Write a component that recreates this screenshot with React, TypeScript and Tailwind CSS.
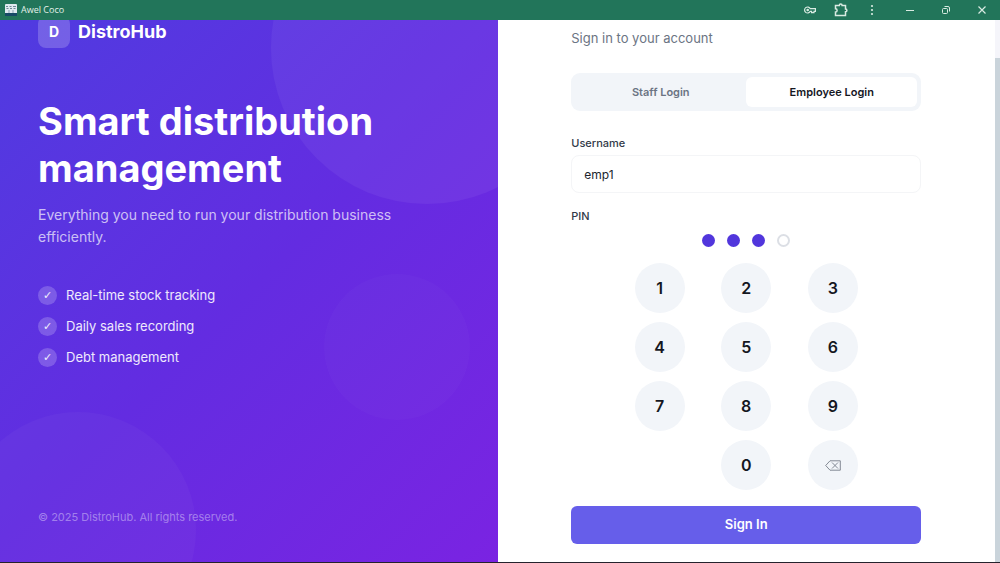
import { useState } from "react";
import type { ReactNode } from "react";

const features = ["Real-time stock tracking", "Daily sales recording", "Debt management"];
const digits = ["1", "2", "3", "4", "5", "6", "7", "8", "9"];

function BarButton({ label, children }: { label: string; children: ReactNode }) {
  return (
    <button type="button" aria-label={label} className="flex h-5 items-center justify-center text-[#d9ebe2]">
      {children}
    </button>
  );
}

function TitleBar() {
  return (
    <header className="relative z-10 flex h-5 shrink-0 items-center justify-between bg-[#22755a] pl-[5px]">
      <div className="flex items-center gap-1">
        <svg viewBox="0 0 12 12" className="size-3" aria-hidden="true">
          <rect width="12" height="12" rx="1" fill="#dfeaf0" />
          <rect y="9" width="12" height="3" fill="#174a66" />
          <path d="M1 2.500h2M4.500 2.500h2M8 2.500h3M1.500 4.500h2M5 4.500h2M8.500 4.500h2" stroke="#6d8795" strokeWidth="1" />
          <path d="M4 6v3M8 6v3" stroke="#8ba5b3" strokeWidth="1" />
        </svg>
        <span className="font-['Open_Sans',sans-serif] text-[9px] leading-5 text-[#e4f1ea]">Awel Coco</span>
      </div>
      <div className="flex items-center">
        <div className="grid grid-cols-[31px_31px_31px] pr-[5px]">
          <BarButton label="Passwords">
            <svg viewBox="0 0 12 8" className="h-2 w-3" fill="none" stroke="currentColor" strokeWidth="1.200">
              <path d="M6.300 2.700A3 3 0 1 0 6.300 5.300H7.600V6.600H10V5.300H11.400V2.700Z" />
              <circle cx="3.700" cy="4" r="0.700" fill="currentColor" />
            </svg>
          </BarButton>
          <BarButton label="Extensions">
            <svg viewBox="0 0 14 14" className="size-[14px]" fill="none" stroke="currentColor" strokeWidth="1.500">
              <path d="M1.500 2.500H5.300A1.400 1.400 0 0 1 8.100 2.500H11.500V6A1.400 1.400 0 0 1 11.500 8.800V12.500H1.500V9A1.600 1.600 0 0 0 1.500 5.800Z" />
            </svg>
          </BarButton>
          <BarButton label="Menu">
            <svg viewBox="0 0 4 12" className="h-3 w-1" fill="currentColor">
              <circle cx="2" cy="2" r="1.100" />
              <circle cx="2" cy="6" r="1.100" />
              <circle cx="2" cy="10" r="1.100" />
            </svg>
          </BarButton>
        </div>
        <div className="grid grid-cols-3">
          <BarButton label="Minimize">
            <svg viewBox="0 0 36 20" className="h-5 w-9" stroke="currentColor">
              <path d="M14 10.500h8" />
            </svg>
          </BarButton>
          <BarButton label="Restore">
            <svg viewBox="0 0 36 20" className="h-5 w-9" fill="none" stroke="currentColor">
              <rect x="14.500" y="8.500" width="5" height="5" rx="1" />
              <path d="M16.500 6.500h3.500a1.500 1.500 0 0 1 1.500 1.500v3.500" />
            </svg>
          </BarButton>
          <BarButton label="Close">
            <svg viewBox="0 0 36 20" className="h-5 w-9" stroke="currentColor" strokeWidth="1.200">
              <path d="M14.500 6.500l7 7M21.500 6.500l-7 7" />
            </svg>
          </BarButton>
        </div>
      </div>
    </header>
  );
}

function BrandPanel() {
  return (
    <section className="relative flex flex-col bg-linear-135 from-[#4f3be0] via-[#632ce1] to-[#7a23e2] px-[38px] pb-[37px] text-white">
      <div className="pointer-events-none absolute inset-0 overflow-hidden" aria-hidden="true">
        <div className="absolute -top-32 -right-[85px] size-[312px] rounded-full bg-white/5" />
        <div className="absolute -bottom-[86px] -left-10 size-[236px] rounded-full bg-white/3" />
        <div className="absolute right-7 bottom-[142px] size-[146px] rounded-full bg-white/2" />
      </div>
      <div className="relative -mt-1 flex items-center gap-2">
        <div className="flex size-8 items-center justify-center rounded-lg bg-white/20 text-sm font-bold">D</div>
        <span className="text-lg font-bold">DistroHub</span>
      </div>
      <h1 className="relative mt-[50px] text-[38px] leading-[47px] font-bold">
        Smart distribution
        <br />
        management
      </h1>
      <p className="relative mt-3 max-w-[375px] text-sm leading-[22px] text-white/70">
        Everything you need to run your distribution business efficiently.
      </p>
      <ul className="relative mt-[38px] flex flex-col gap-3">
        {features.map((feature) => (
          <li key={feature} className="flex items-center gap-[9px] text-[13px] leading-[19px] text-white/90">
            <span className="flex size-[19px] items-center justify-center rounded-full bg-white/20 font-['DejaVu_Sans',sans-serif] text-[11px]">
              ✓
            </span>
            {feature}
          </li>
        ))}
      </ul>
      <p className="relative mt-auto text-[11px] leading-4 text-white/40">© 2025 DistroHub. All rights reserved.</p>
    </section>
  );
}

function LoginPanel() {
  const [tab, setTab] = useState("Employee Login");
  const [pin, setPin] = useState("123");
  const press = (digit: string) => setPin((value) => (value + digit).slice(0, 4));
  const keyClass =
    "flex size-[50px] items-center justify-center rounded-full bg-[#f2f5f9] text-base font-semibold text-[#15171f]";

  return (
    <section className="flex flex-col items-center bg-white px-6 pt-2 pb-[18px]">
      <form className="flex w-full max-w-[350px] flex-col" onSubmit={(event) => event.preventDefault()}>
        <p className="text-[13px] leading-5 text-[#6b7483]">Sign in to your account</p>
        <div className="mt-[25px] flex rounded-[9px] bg-[#f2f5f9] p-1">
          {["Staff Login", "Employee Login"].map((name) => (
            <button
              key={name}
              type="button"
              aria-pressed={tab === name}
              onClick={() => setTab(name)}
              className={
                tab === name
                  ? "h-[30px] flex-1 rounded-md bg-white text-[11px] font-semibold text-[#15171f]"
                  : "h-[30px] flex-1 rounded-md text-[11px] font-semibold text-[#6b7483]"
              }
            >
              {name}
            </button>
          ))}
        </div>
        <label htmlFor="username" className="mt-6 text-[11px] leading-4 font-medium text-[#323a48]">
          Username
        </label>
        <input
          id="username"
          defaultValue="emp1"
          className="mt-1 h-[38px] rounded-lg border border-[#f4f5f7] bg-white px-3 text-xs text-[#20242d] outline-none"
        />
        <p className="mt-[15px] text-[11px] leading-4 font-medium text-[#323a48]">PIN</p>
        <div className="mt-[10px] flex justify-center gap-3" role="status" aria-label={pin.length + " of 4 digits entered"}>
          {[0, 1, 2, 3].map((slot) => (
            <span
              key={slot}
              className={
                slot < pin.length
                  ? "size-[13px] rounded-full bg-[#5136dc]"
                  : "size-[13px] rounded-full border-2 border-[#dcdfe5]"
              }
            />
          ))}
        </div>
        <div className="mx-auto mt-4 grid w-[250px] grid-cols-3 justify-items-center gap-x-[10px] gap-y-[9px]">
          {digits.map((digit) => (
            <button key={digit} type="button" className={keyClass} onClick={() => press(digit)}>
              {digit}
            </button>
          ))}
          <span />
          <button type="button" className={keyClass} onClick={() => press("0")}>
            0
          </button>
          <button type="button" aria-label="Delete digit" className={keyClass} onClick={() => setPin(pin.slice(0, -1))}>
            <svg viewBox="0 0 16 11" className="h-[11px] w-4" fill="none" stroke="#777e89" strokeWidth="0.900">
              <path d="M5 0.800H15.300V10.200H5L0.700 5.500ZM7 2.500l6 6M13 2.500l-6 6" />
            </svg>
          </button>
        </div>
        <button type="submit" className="mt-4 h-[38px] rounded-md bg-[#665eea] text-[13px] font-semibold text-white">
          Sign In
        </button>
      </form>
    </section>
  );
}

export default function App() {
  return (
    <div className="flex min-h-screen flex-col border-b border-[#25232d] bg-white font-[Inter,sans-serif]">
      <TitleBar />
      <main className="grid flex-1 grid-cols-[minmax(0,1fr)_minmax(0,1fr)_5px]">
        <BrandPanel />
        <LoginPanel />
        <div className="flex flex-col bg-[#f5f5fa] pt-[38px]" aria-hidden="true">
          <div className="flex-1 bg-[#cad4db]" />
        </div>
      </main>
    </div>
  );
}
